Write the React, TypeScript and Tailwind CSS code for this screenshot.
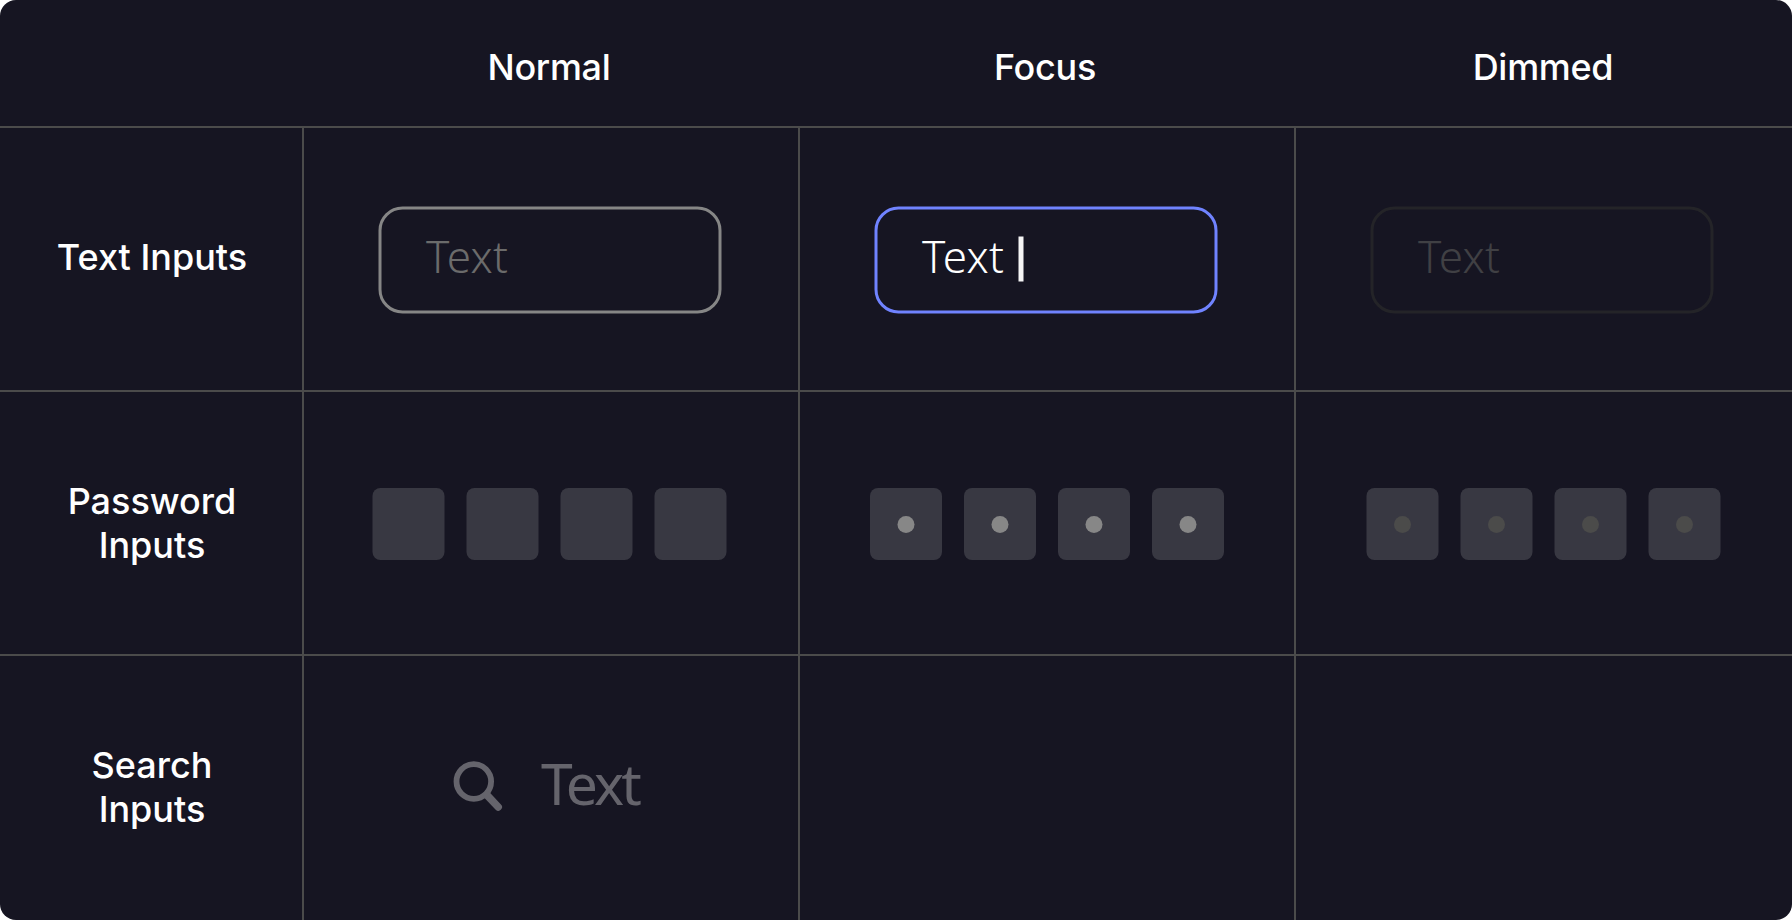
import React from "react";

const label = "font-['Inter',sans-serif] text-[36px] leading-[44px] font-medium text-white text-center";
const heading = "font-['Inter',sans-serif] text-[36px] leading-[44px] font-medium tracking-[-0.3px] text-white text-center";
const cell = "flex border-[#4b4b4b]";

function Field({ tone, text, caret }: { tone: string; text: string; caret?: boolean }) {
  return (
    <div className={`flex h-[107px] w-[343px] translate-x-[0.5px] translate-y-[0.5px] items-start rounded-[24px] border-[3px] pl-[44.5px] pt-[16px] ${tone}`}>
      <span className={`font-['Noto_Sans','Open_Sans',sans-serif] text-[44px] leading-[60px] font-[320] tracking-[0.4px] ${text}`}>Text</span>
      {caret && <span className="ml-[14.5px] mt-[11px] h-[45px] w-[5px] bg-[#f5f5f5]" />}
    </div>
  );
}

function Pins({ dot }: { dot?: string }) {
  return (
    <div className="flex gap-[22px]">
      {[0, 1, 2, 3].map((i) => (
        <div key={i} className="flex size-[72px] items-center justify-center rounded-[8px] bg-[#383842]">
          {dot && <span className={`size-[17px] -translate-x-[0.5px] rounded-full ${dot}`} />}
        </div>
      ))}
    </div>
  );
}

export default function App() {
  return (
    <div className="bg-white">
      <div className="grid h-[920px] w-[1792px] grid-cols-[304px_496px_496px_496px] grid-rows-[128px_264px_264px_264px] overflow-hidden rounded-[16px] bg-[#161522]">
        <div className={`${cell} border-b-2`} />
        <div className={`${cell} justify-center border-b-2 pt-[45px] pr-[6px]`}><span className={heading}>Normal</span></div>
        <div className={`${cell} justify-center border-b-2 pt-[45px] pr-[6px]`}><span className={heading}>Focus</span></div>
        <div className={`${cell} justify-center border-b-2 pt-[45px] pr-[2px]`}><span className={heading}>Dimmed</span></div>

        <div className={`${cell} justify-center border-r-2 border-b-2 pt-[107px] pl-[2px]`}><span className={label}>Text Inputs</span></div>
        <div className={`${cell} border-r-2 border-b-2 pt-[78px] pl-[74px]`}><Field tone="border-[#868686]" text="text-[#6b6b6b]" /></div>
        <div className={`${cell} border-r-2 border-b-2 pt-[78px] pl-[74px]`}><Field tone="border-[#7083ff]" text="text-white" caret /></div>
        <div className={`${cell} border-b-2 pt-[78px] pl-[74px]`}><Field tone="border-[#242428]" text="text-[#404044]" /></div>

        <div className={`${cell} justify-center border-r-2 border-b-2 pt-[87px] pl-[2px]`}><span className={label}>Password<br />Inputs</span></div>
        <div className={`${cell} border-r-2 border-b-2 pt-[96px] pl-[68px]`}><div className="translate-x-[0.5px]"><Pins /></div></div>
        <div className={`${cell} border-r-2 border-b-2 pt-[96px] pl-[70px]`}><Pins dot="bg-[#878787]" /></div>
        <div className={`${cell} border-b-2 pt-[96px] pl-[70px]`}><div className="translate-x-[0.5px]"><Pins dot="bg-[#4b4b4a]" /></div></div>

        <div className={`${cell} justify-center border-r-2 pt-[87px] pl-[2px]`}><span className={label}>Search<br />Inputs</span></div>
        <div className={`${cell} border-r-2 pt-[105px] pl-[149px]`}>
          <svg className="h-[50px] w-[50px] shrink-0" viewBox="0 0 50 50" fill="none" stroke="#65646c">
            <circle cx="20.8" cy="20.5" r="17.3" strokeWidth="5.8" />
            <path d="M34 34.2L45.2 46" strokeWidth="7.6" strokeLinecap="round" />
          </svg>
          <span className="-mt-[17px] ml-[38px] font-['Noto_Sans','Open_Sans',sans-serif] text-[57px] leading-[79px] font-normal tracking-[-2.9px] text-[#65646c]">Text</span>
        </div>
        <div className={`${cell} border-r-2`} />
        <div className={cell} />
      </div>
    </div>
  );
}
